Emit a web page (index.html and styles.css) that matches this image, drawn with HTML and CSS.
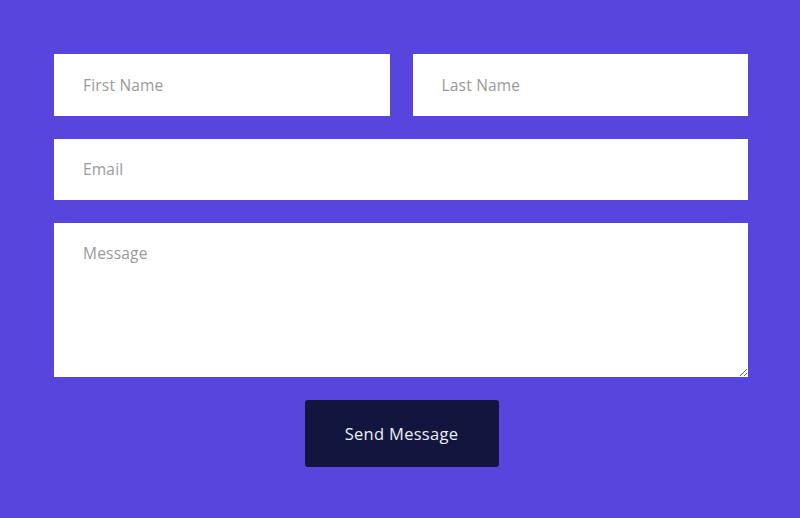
FILE: index.html
```html
<!DOCTYPE html>
<html>
<head>
<meta charset="utf-8">
<link rel="stylesheet" href="styles.css">
</head>
<body>
<form class="form">
  <div class="row">
    <input class="field" type="text" placeholder="First Name">
    <input class="field" type="text" placeholder="Last Name">
  </div>
  <input class="field" type="email" placeholder="Email">
  <textarea class="field area" placeholder="Message"></textarea>
  <div class="actions">
    <button class="send" type="button">Send Message</button>
  </div>
</form>
</body>
</html>
```
FILE: styles.css
```css
html, body {
  margin: 0;
  padding: 0;
  background: #5845de;
  height: 100%;
}
body {
  font-family: "Open Sans", "Liberation Sans", sans-serif;
}
.form {
  width: 694px;
  margin: 0 0 0 54px;
  padding-top: 54px;
  display: flex;
  flex-direction: column;
  gap: 23px;
}
.row {
  display: flex;
  gap: 23px;
}
.row .field {
  flex: 1;
  min-width: 0;
}
.field {
  box-sizing: border-box;
  height: 61.5px;
  border: none;
  outline: none;
  background: #fff;
  padding: 0 29px;
  font-family: inherit;
  font-size: 15.5px;
  letter-spacing: 0.2px;
  color: #333;
  border-radius: 0;
  margin: 0;
}
.field::placeholder {
  color: #9a9a9a;
}
.area {
  height: 154px;
  padding: 19px 29px;
  resize: vertical;
  display: block;
  line-height: 22px;
}
.actions {
  display: flex;
  justify-content: center;
}
.send {
  width: 194px;
  height: 67px;
  margin-left: 1px;
  background: #12163f;
  color: #eceef8;
  border: none;
  border-radius: 3px;
  font-family: inherit;
  font-size: 16.5px;
  letter-spacing: 0.3px;
  cursor: pointer;
}
```
